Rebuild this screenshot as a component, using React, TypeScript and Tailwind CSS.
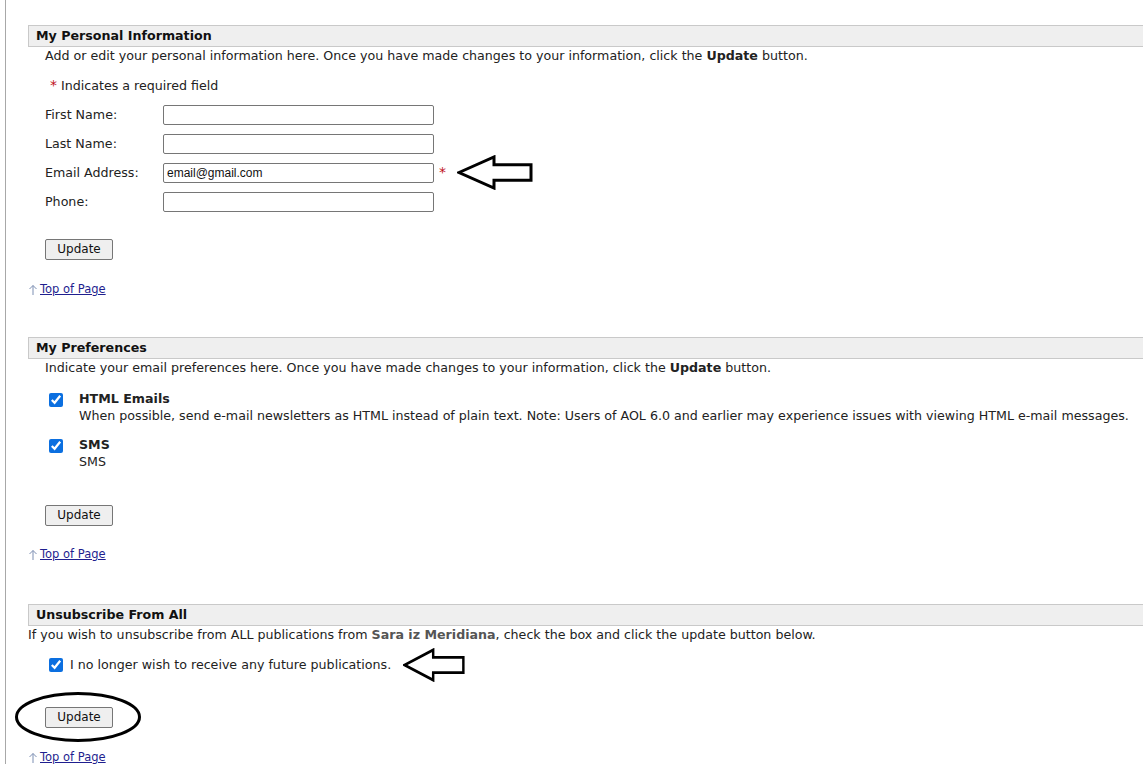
import React from "react";

const font = { fontFamily: '"DejaVu Sans", Verdana, sans-serif' };

function SectionHeader({ title }: { title: string }) {
  return (
    <div className="h-[22px] border-y border-l border-[#c9c9c9] bg-[#efefef] pl-[7px] text-[12.65px] font-bold leading-[20px] text-[#111]">
      {title}
    </div>
  );
}

function UpdateButton() {
  return (
    <button className="h-[21px] w-[68px] rounded-[2px] border border-[#767676] bg-[#efefef] text-[12px] leading-[19px] text-[#111]">
      Update
    </button>
  );
}

function TopOfPage() {
  return (
    <div className="flex h-[15px] items-center text-[11.5px] leading-[15px]">
      <svg width="10" height="12" viewBox="0 0 10 12" className="mr-[2px]">
        <path d="M5 11V1.5M1.5 5L5 1.5 8.5 5" fill="none" stroke="#7d8fb3" strokeWidth="1" />
      </svg>
      <a href="#" className="text-[#1f1f8f] underline">Top of Page</a>
    </div>
  );
}

function LeftArrow({ w, h }: { w: number; h: number }) {
  return (
    <svg width={w} height={h} viewBox="0 0 76 36" preserveAspectRatio="none" className="shrink-0">
      <path d="M2 18 L37 2 L37 10 L74 10 L74 26 L37 26 L37 34 Z" fill="white" stroke="black" strokeWidth="3" strokeLinejoin="miter" />
    </svg>
  );
}

function Field({ label, value, required }: { label: string; value?: string; required?: boolean }) {
  return (
    <div className="flex h-[29px] items-center">
      <div className="w-[118px] shrink-0 text-[#222]">{label}</div>
      <input
        readOnly
        value={value ?? ""}
        className="h-[20px] w-[271px] shrink-0 rounded-[2px] border border-[#767676] bg-white px-[3px] text-[12px] text-[#111]"
        style={{ fontFamily: '"Liberation Sans", Arial, sans-serif' }}
      />
      {required && (
        <>
          <span className="ml-[5px] text-[14px] text-[#c0101a]">*</span>
          <span className="ml-[11px]">
            <LeftArrow w={76} h={35} />
          </span>
        </>
      )}
    </div>
  );
}

function Check() {
  return <input type="checkbox" checked readOnly className="m-0 h-[14px] w-[14px] shrink-0 accent-[#0b6fe0]" />;
}

export default function App() {
  return (
    <div className="h-[764px] w-[1143px] overflow-hidden bg-white text-[12.65px] leading-[17px] text-[#222]" style={font}>
      <div className="ml-[5px] min-h-[764px] border-l border-[#a8a8a8] pl-[22px]">
        {/* Personal information */}
        <div className="pt-[25px]">
          <SectionHeader title="My Personal Information" />
          <div className="pl-[17px]">
            <p>
              Add or edit your personal information here. Once you have made changes to your information, click the <b>Update</b> button.
            </p>
            <p className="mt-[13px] pl-[5px]">
              <span className="text-[14px] text-[#c0101a]">*</span> Indicates a required field
            </p>
            <div className="mt-[6px]">
              <Field label="First Name:" />
              <Field label="Last Name:" />
              <Field label="Email Address:" value="email@gmail.com" required />
              <Field label="Phone:" />
            </div>
            <div className="mt-[23px]">
              <UpdateButton />
            </div>
          </div>
          <div className="mt-[22px]">
            <TopOfPage />
          </div>
        </div>

        {/* Preferences */}
        <div className="mt-[40px]">
          <SectionHeader title="My Preferences" />
          <div className="pl-[17px]">
            <p>
              Indicate your email preferences here. Once you have made changes to your information, click the <b>Update</b> button.
            </p>
            <div className="mt-[14px] flex">
              <div className="w-[34px] shrink-0 pl-[4px] pt-[3px]">
                <Check />
              </div>
              <div>
                <div className="font-bold">HTML Emails</div>
                <div className="whitespace-nowrap">
                  When possible, send e-mail newsletters as HTML instead of plain text. Note: Users of AOL 6.0 and earlier may experience issues with viewing HTML e-mail messages.
                </div>
              </div>
            </div>
            <div className="mt-[12px] flex">
              <div className="w-[34px] shrink-0 pl-[4px] pt-[3px]">
                <Check />
              </div>
              <div>
                <div className="font-bold">SMS</div>
                <div>SMS</div>
              </div>
            </div>
            <div className="mt-[35px]">
              <UpdateButton />
            </div>
          </div>
          <div className="mt-[21px]">
            <TopOfPage />
          </div>
        </div>

        {/* Unsubscribe */}
        <div className="mt-[42px]">
          <SectionHeader title="Unsubscribe From All" />
          <p>
            If you wish to unsubscribe from ALL publications from <b className="text-[#555]">Sara iz Meridiana</b>, check the box and click the update button below.
          </p>
          <div className="mt-[12px] flex h-[19px] items-center pl-[21px]">
            <Check />
            <span className="ml-[7px]">I no longer wish to receive any future publications.</span>
            <span className="ml-[12px]">
              <LeftArrow w={62} h={34} />
            </span>
          </div>
          <div className="relative mt-[33px] pl-[17px]">
            <UpdateButton />
            <svg width="128" height="52" viewBox="0 0 128 52" className="pointer-events-none absolute left-[-14px] top-[-16px]">
              <ellipse cx="64" cy="26" rx="61.5" ry="23.5" fill="none" stroke="black" strokeWidth="3" />
            </svg>
          </div>
          <div className="mt-[22px]">
            <TopOfPage />
          </div>
        </div>
      </div>
    </div>
  );
}
